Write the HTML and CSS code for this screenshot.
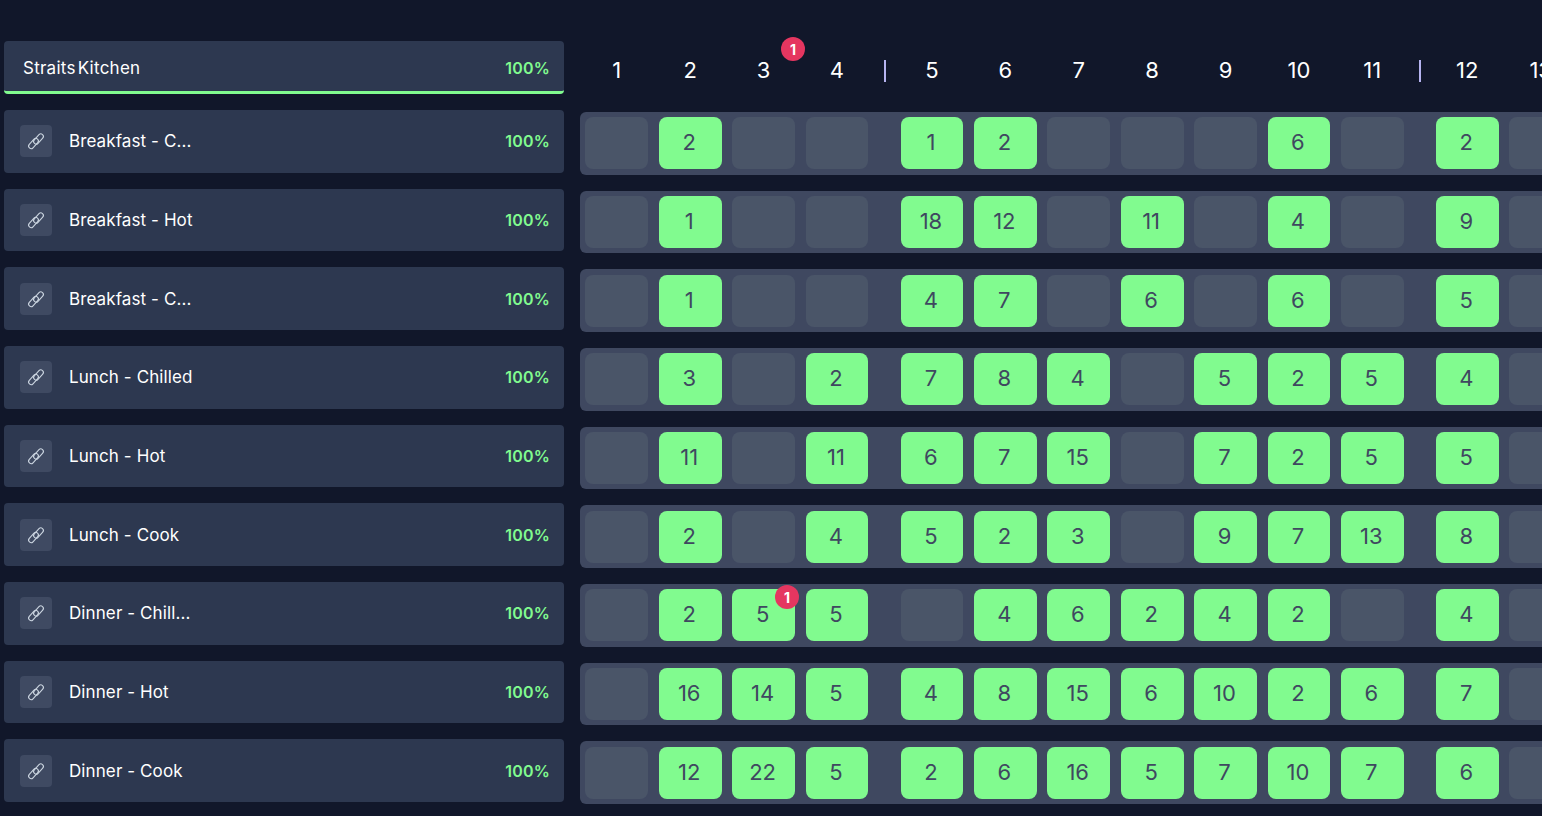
FILE: index.html
```html
<!DOCTYPE html>
<html>
<head>
    <title>Straits Kitchen</title>
    <link rel="stylesheet" href="styles.css">
</head>
<body>
    <svg class="defs" width="0" height="0">
        <symbol id="link" viewBox="0 0 20 20">
            <rect x="10" y="2" width="5" height="12" rx="2.5" transform="rotate(42 12.5 8)"/>
            <rect x="5" y="6.5" width="5" height="12" rx="2.5" transform="rotate(42 7.5 12.5)"/>
        </symbol>
    </svg>
    <div class="board">
        <div class="names">
            <div class="kitchen">
                <span class="kitchen-name">Straits Kitchen</span>
                <span class="percent">100%</span>
            </div>
            <div class="name-row"><span class="link-box"><svg><use href="#link"/></svg></span><span class="name">Breakfast - C...</span><span class="percent">100%</span></div>
            <div class="name-row"><span class="link-box"><svg><use href="#link"/></svg></span><span class="name">Breakfast - Hot</span><span class="percent">100%</span></div>
            <div class="name-row"><span class="link-box"><svg><use href="#link"/></svg></span><span class="name">Breakfast - C...</span><span class="percent">100%</span></div>
            <div class="name-row"><span class="link-box"><svg><use href="#link"/></svg></span><span class="name">Lunch - Chilled</span><span class="percent">100%</span></div>
            <div class="name-row"><span class="link-box"><svg><use href="#link"/></svg></span><span class="name">Lunch - Hot</span><span class="percent">100%</span></div>
            <div class="name-row"><span class="link-box"><svg><use href="#link"/></svg></span><span class="name">Lunch - Cook</span><span class="percent">100%</span></div>
            <div class="name-row"><span class="link-box"><svg><use href="#link"/></svg></span><span class="name">Dinner - Chill...</span><span class="percent">100%</span></div>
            <div class="name-row"><span class="link-box"><svg><use href="#link"/></svg></span><span class="name">Dinner - Hot</span><span class="percent">100%</span></div>
            <div class="name-row"><span class="link-box"><svg><use href="#link"/></svg></span><span class="name">Dinner - Cook</span><span class="percent">100%</span></div>
        </div>
        <div class="weeks">
            <div class="week-head">
                <div class="group">
                    <div class="day">1</div><div class="day">2</div><div class="day">3<span class="badge head-badge">1</span></div><div class="day">4</div>
                </div>
                <div class="group">
                    <div class="day">5</div><div class="day">6</div><div class="day">7</div><div class="day">8</div><div class="day">9</div><div class="day">10</div><div class="day">11</div>
                </div>
                <div class="group">
                    <div class="day">12</div><div class="day">13</div>
                </div>
            </div>
            <div class="week-row">
                <div class="group"><div class="cell"></div><div class="cell on">2</div><div class="cell"></div><div class="cell"></div></div>
                <div class="group"><div class="cell on">1</div><div class="cell on">2</div><div class="cell"></div><div class="cell"></div><div class="cell"></div><div class="cell on">6</div><div class="cell"></div></div>
                <div class="group"><div class="cell on">2</div><div class="cell"></div></div>
            </div>
            <div class="week-row">
                <div class="group"><div class="cell"></div><div class="cell on">1</div><div class="cell"></div><div class="cell"></div></div>
                <div class="group"><div class="cell on">18</div><div class="cell on">12</div><div class="cell"></div><div class="cell on">11</div><div class="cell"></div><div class="cell on">4</div><div class="cell"></div></div>
                <div class="group"><div class="cell on">9</div><div class="cell"></div></div>
            </div>
            <div class="week-row">
                <div class="group"><div class="cell"></div><div class="cell on">1</div><div class="cell"></div><div class="cell"></div></div>
                <div class="group"><div class="cell on">4</div><div class="cell on">7</div><div class="cell"></div><div class="cell on">6</div><div class="cell"></div><div class="cell on">6</div><div class="cell"></div></div>
                <div class="group"><div class="cell on">5</div><div class="cell"></div></div>
            </div>
            <div class="week-row">
                <div class="group"><div class="cell"></div><div class="cell on">3</div><div class="cell"></div><div class="cell on">2</div></div>
                <div class="group"><div class="cell on">7</div><div class="cell on">8</div><div class="cell on">4</div><div class="cell"></div><div class="cell on">5</div><div class="cell on">2</div><div class="cell on">5</div></div>
                <div class="group"><div class="cell on">4</div><div class="cell"></div></div>
            </div>
            <div class="week-row">
                <div class="group"><div class="cell"></div><div class="cell on">11</div><div class="cell"></div><div class="cell on">11</div></div>
                <div class="group"><div class="cell on">6</div><div class="cell on">7</div><div class="cell on">15</div><div class="cell"></div><div class="cell on">7</div><div class="cell on">2</div><div class="cell on">5</div></div>
                <div class="group"><div class="cell on">5</div><div class="cell"></div></div>
            </div>
            <div class="week-row">
                <div class="group"><div class="cell"></div><div class="cell on">2</div><div class="cell"></div><div class="cell on">4</div></div>
                <div class="group"><div class="cell on">5</div><div class="cell on">2</div><div class="cell on">3</div><div class="cell"></div><div class="cell on">9</div><div class="cell on">7</div><div class="cell on">13</div></div>
                <div class="group"><div class="cell on">8</div><div class="cell"></div></div>
            </div>
            <div class="week-row">
                <div class="group"><div class="cell"></div><div class="cell on">2</div><div class="cell on">5<span class="badge">1</span></div><div class="cell on">5</div></div>
                <div class="group"><div class="cell"></div><div class="cell on">4</div><div class="cell on">6</div><div class="cell on">2</div><div class="cell on">4</div><div class="cell on">2</div><div class="cell"></div></div>
                <div class="group"><div class="cell on">4</div><div class="cell"></div></div>
            </div>
            <div class="week-row">
                <div class="group"><div class="cell"></div><div class="cell on">16</div><div class="cell on">14</div><div class="cell on">5</div></div>
                <div class="group"><div class="cell on">4</div><div class="cell on">8</div><div class="cell on">15</div><div class="cell on">6</div><div class="cell on">10</div><div class="cell on">2</div><div class="cell on">6</div></div>
                <div class="group"><div class="cell on">7</div><div class="cell"></div></div>
            </div>
            <div class="week-row">
                <div class="group"><div class="cell"></div><div class="cell on">12</div><div class="cell on">22</div><div class="cell on">5</div></div>
                <div class="group"><div class="cell on">2</div><div class="cell on">6</div><div class="cell on">16</div><div class="cell on">5</div><div class="cell on">7</div><div class="cell on">10</div><div class="cell on">7</div></div>
                <div class="group"><div class="cell on">6</div><div class="cell"></div></div>
            </div>
        </div>
    </div>
</body>
</html>
```

FILE: styles.css
```css
html, body {
    height: 100%;
    overflow: hidden;
}
body {
    margin: 0;
    background-color: #11172a;
    color: #fff;
    font-family: 'Inter', sans-serif;
}
.defs {
    display: block;
    height: 0;
}
.board {
    display: flex;
    gap: 16px;
    padding: 41px 0 0 4px;
}
.names {
    display: flex;
    flex: none;
    flex-direction: column;
    gap: 16px;
    width: 560px;
}
.kitchen {
    display: flex;
    justify-content: space-between;
    align-items: center;
    box-sizing: border-box;
    height: 53px;
    padding: 3px 14px 0 19px;
    background: #2d3850;
    border-bottom: 3px solid #81fb8f;
    border-radius: 4px;
}
.kitchen-name {
    font-size: 17px;
    letter-spacing: 0.25px;
    word-spacing: -3px;
}
.name-row {
    display: flex;
    align-items: center;
    box-sizing: border-box;
    height: 62.67px;
    padding: 0 14px 0 16px;
    background: #2d3850;
    border-radius: 4px;
}
.link-box {
    display: flex;
    justify-content: center;
    align-items: center;
    width: 32px;
    height: 32px;
    margin-right: 17px;
    background: #3f4a62;
    border-radius: 4px;
}
.link-box svg {
    width: 20px;
    height: 20px;
    fill: none;
    stroke: #cbd5e0;
    stroke-width: 1.1;
}
.name {
    flex: 1;
    font-size: 17px;
    letter-spacing: 0.1px;
}
.percent {
    color: #81fb8f;
    font-size: 16px;
    font-weight: 600;
    letter-spacing: 0.2px;
}
.weeks {
    display: flex;
    flex: 1;
    flex-direction: column;
    gap: 16px;
    min-width: 0;
}
.week-head {
    display: flex;
    gap: 32.2px;
    height: 55px;
    padding-left: 5.4px;
}
.week-head .group {
    position: relative;
}
.week-head .group + .group::before {
    content: '';
    position: absolute;
    left: -16.5px;
    top: 19px;
    width: 1.5px;
    height: 22px;
    background: #b6b4f0;
}
.week-row {
    display: flex;
    gap: 32.2px;
    box-sizing: border-box;
    width: 1100px;
    height: 62.67px;
    padding: 5.33px 5.4px;
    background: #3f4860;
    border-radius: 6px 0 0 6px;
}
.group {
    display: flex;
    flex: none;
    gap: 10.6px;
}
.day {
    position: relative;
    display: flex;
    justify-content: center;
    align-items: center;
    flex: none;
    width: 62.8px;
    height: 58px;
    font-size: 22px;
}
.cell {
    position: relative;
    display: flex;
    justify-content: center;
    align-items: center;
    flex: none;
    box-sizing: border-box;
    width: 62.8px;
    height: 52px;
    padding: 0 2px 2px 0;
    background: #4a5568;
    border-radius: 8px;
    font-size: 22px;
}
.cell.on {
    background: #81fb8f;
    color: #3f4860;
}
.badge {
    position: absolute;
    top: -4px;
    right: -4px;
    display: flex;
    justify-content: center;
    align-items: center;
    width: 24px;
    height: 24px;
    background: #e53660;
    border-radius: 50%;
    color: #fff;
    font-size: 14px;
    font-weight: 700;
}
.head-badge {
    top: -4px;
    right: -10px;
}
```
